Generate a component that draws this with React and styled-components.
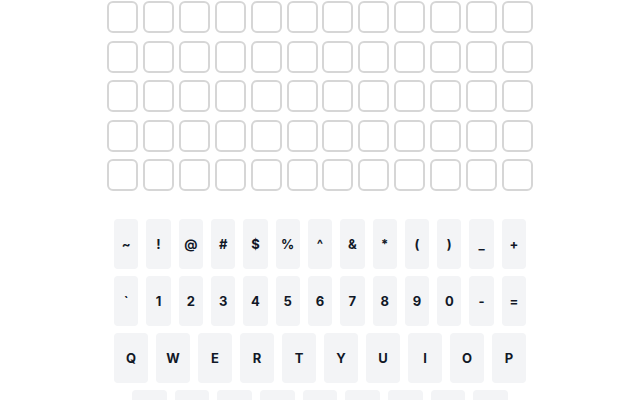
import styled, { createGlobalStyle } from "styled-components";

const GlobalStyle = createGlobalStyle`
  html, body {
    margin: 0;
    padding: 0;
    background: #ffffff;
    font-family: "Inter", "Liberation Sans", sans-serif;
  }
`;

const Page = styled.div`
  width: 640px;
  height: 400px;
  overflow: hidden;
  display: flex;
  flex-direction: column;
  align-items: center;
  padding-top: 1px;
  box-sizing: border-box;
`;

const Board = styled.div`
  display: grid;
  grid-template-columns: repeat(12, 31px);
  grid-auto-rows: 32px;
  column-gap: 4.9px;
  row-gap: 7.5px;
`;

const Tile = styled.div`
  box-sizing: border-box;
  border: 2px solid #d6d6d6;
  border-radius: 6px;
  background: #ffffff;
`;

const Keyboard = styled.div`
  margin-top: 28px;
  width: 412px;
  display: flex;
  flex-direction: column;
  gap: 7.5px;
`;

const KeyRow = styled.div`
  display: flex;
  gap: 8px;
  padding: 0 ${(p) => p.$inset || 0}px;
`;

const Key = styled.button`
  flex: 1;
  height: 49.5px;
  border: none;
  border-radius: 4px;
  background: #f3f4f6;
  color: #111827;
  font-family: "Inter", "Liberation Sans", sans-serif;
  font-weight: 700;
  font-size: 13px;
  padding: 0;
  display: flex;
  align-items: center;
  justify-content: center;
`;

const ROWS = 5;
const COLS = 12;

const KEY_ROWS = [
  { keys: ["~", "!", "@", "#", "$", "%", "^", "&", "*", "(", ")", "_", "+"] },
  { keys: ["`", "1", "2", "3", "4", "5", "6", "7", "8", "9", "0", "-", "="] },
  { keys: ["Q", "W", "E", "R", "T", "Y", "U", "I", "O", "P"] },
  { keys: ["A", "S", "D", "F", "G", "H", "J", "K", "L"], inset: 18 },
];

const App = () => {
  return (
    <>
      <GlobalStyle />
      <Page>
        <Board>
          {Array.from({ length: ROWS * COLS }).map((_, i) => (
            <Tile key={i} />
          ))}
        </Board>
        <Keyboard>
          {KEY_ROWS.map((row, r) => (
            <KeyRow key={r} $inset={row.inset}>
              {row.keys.map((k) => (
                <Key key={k}>{k}</Key>
              ))}
            </KeyRow>
          ))}
        </Keyboard>
      </Page>
    </>
  );
};

export default App;
